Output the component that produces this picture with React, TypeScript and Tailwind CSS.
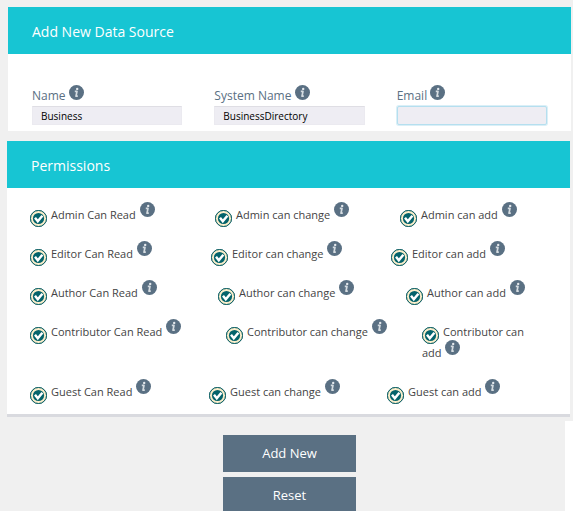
const fields = [
  { id: 'name', label: 'Name', value: 'Business' },
  { id: 'system-name', label: 'System Name', value: 'BusinessDirectory' },
  { id: 'email', label: 'Email', value: '', active: true },
];

const permissions = [
  { role: 'Admin', cols: 'grid-cols-[185fr_185fr_146fr]' },
  { role: 'Editor', cols: 'grid-cols-[181fr_180fr_155fr]' },
  { role: 'Author', cols: 'grid-cols-[188fr_188fr_140fr]' },
  { role: 'Contributor', cols: 'grid-cols-[196fr_196fr_124fr]' },
  { role: 'Guest', cols: 'grid-cols-[179fr_178fr_159fr]' },
];

const actions = ['Can Read', 'can change', 'can add'];

function InfoIcon({ className }: { className: string }) {
  return (
    <svg viewBox="0 0 15 15" aria-hidden="true" className={`inline-block w-[15px] h-[15px] ${className}`}>
      <circle cx="7.5" cy="7.5" r="7.5" fill="#5a7083" />
      <circle cx="8.2" cy="3.9" r="1.2" fill="#e3e8ec" />
      <path d="M5.8 6.4h2.2L7 11.2h1.8" fill="none" stroke="#d5dce1" strokeWidth="1.7" strokeLinejoin="round" />
    </svg>
  );
}

function PermissionBox({ id, label }: { id: string; label: string }) {
  return (
    <div>
      <span className="relative inline-block w-[17px] h-[17px] mr-1 -my-1 align-[-4px]">
        <input id={id} type="checkbox" defaultChecked className="peer absolute inset-0 appearance-none rounded-full border border-[#0b5f66] bg-[#fbeecb]" />
        <svg viewBox="0 0 17 17" aria-hidden="true" className="absolute inset-0 hidden peer-checked:block pointer-events-none">
          <circle cx="8.5" cy="8.5" r="8" fill="#fbeecb" stroke="#0b5f66" />
          <circle cx="8.5" cy="8.5" r="5.6" fill="#04636b" />
          <path d="M5 7.8l2.8 3.4 4.6-5.4" fill="none" stroke="#fff" strokeWidth="2.5" />
        </svg>
      </span>
      <label htmlFor={id}>{label}</label>{' '}
      <InfoIcon className="ml-px -mt-1 align-[2px]" />
    </div>
  );
}

function PanelHeader({ title }: { title: string }) {
  return <h2 className="bg-[#17c5d3] px-6 pt-[13px] pb-[11px] text-sm leading-[23px] text-white">{title}</h2>;
}

export default function App() {
  return (
    <form className="min-h-screen bg-white font-['Open_Sans',sans-serif]" onSubmit={(e) => e.preventDefault()}>
      <div className="bg-[#f0f0f0] pt-[7px] pb-1">
        <section className="ml-2 mr-0.5 mb-2.5 bg-white">
          <PanelHeader title="Add New Data Source" />
          <div className="grid grid-cols-3 gap-8 px-6 pt-[30px] pb-1.5">
            {fields.map(({ id, label, value, active }) => (
              <div key={id}>
                <div className="h-[22px] text-xs leading-[23px] text-[#5a7083]">
                  <label htmlFor={id}>{label}</label>{' '}
                  <InfoIcon className="align-[0px]" />
                </div>
                <input
                  id={id}
                  type="text"
                  defaultValue={value}
                  className={`block w-full h-[19px] px-2 bg-[#eeedf3] text-[10px] text-black outline-none border ${active ? 'border-[#b5dfef] rounded-xs ring-1 ring-[#b5dfef]/50' : 'border-[#ebeaf0] border-t-[#dfdee4]'}`}
                />
              </div>
            ))}
          </div>
        </section>

        <section className="ml-[7px] mr-[3px] bg-white border-b-3 border-[#d9dadf]">
          <PanelHeader title="Permissions" />
          <div className="flex flex-col gap-[18px] pl-[23px] pr-6 pt-4 pb-3 text-[11px] leading-[21px] text-[#444]">
            {permissions.map(({ role, cols }) => (
              <div key={role} className={`grid ${cols}`}>
                {actions.map((action) => (
                  <PermissionBox key={action} id={`${role}-${action}`.replace(' ', '-')} label={`${role} ${action}`} />
                ))}
              </div>
            ))}
          </div>
        </section>
      </div>

      <div className="mr-2 pl-3.5 pt-3.5 flex flex-col items-center gap-[5px] bg-[#f0f0f0] text-[13px] text-white">
        <button type="submit" className="w-[133px] h-[37px] bg-[#5a7083]">Add New</button>
        <button type="reset" className="w-[133px] h-[37px] bg-[#5a7083]">Reset</button>
      </div>
    </form>
  );
}
